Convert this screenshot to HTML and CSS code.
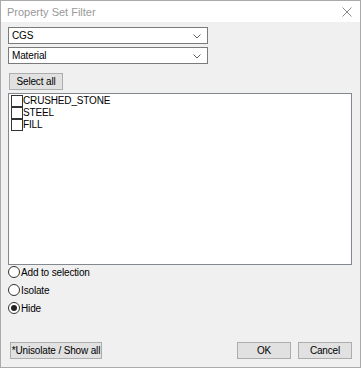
FILE: index.html
```html
<!DOCTYPE html>
<html lang="en">
<head>
  <meta charset="UTF-8">
  <title>Property Set Filter</title>
  <link rel="stylesheet" href="styles.css">
</head>
<body>
  <div class="window">
    <div class="titlebar">
      <span class="title">Property Set Filter</span>
      <svg class="close" width="10" height="10" viewBox="0 0 10 10">
        <path d="M0.5 0.5 L9.5 9.5 M9.5 0.5 L0.5 9.5" stroke="#8a8a8a" stroke-width="1" fill="none"/>
      </svg>
    </div>

    <div class="content">
      <div class="combo">
        <span>CGS</span>
        <svg width="8" height="5" viewBox="0 0 8 5"><path d="M0.5 0.5 L4 4 L7.5 0.5" stroke="#606060" fill="none"/></svg>
      </div>
      <div class="combo">
        <span>Material</span>
        <svg width="8" height="5" viewBox="0 0 8 5"><path d="M0.5 0.5 L4 4 L7.5 0.5" stroke="#606060" fill="none"/></svg>
      </div>

      <button class="btn select-all">Select all</button>

      <div class="list">
        <label class="item"><span class="check"></span>CRUSHED_STONE</label>
        <label class="item"><span class="check"></span>STEEL</label>
        <label class="item"><span class="check"></span>FILL</label>
      </div>

      <div class="radios">
        <label class="radio"><span class="dot"></span>Add to selection</label>
        <label class="radio"><span class="dot"></span>Isolate</label>
        <label class="radio"><span class="dot checked"></span>Hide</label>
      </div>

      <div class="footer">
        <button class="btn wide">*Unisolate / Show all</button>
        <div class="right">
          <button class="btn">OK</button>
          <button class="btn">Cancel</button>
        </div>
      </div>
    </div>
  </div>
</body>
</html>
```

FILE: styles.css
```css
body {
  margin: 0;
  font-family: "Liberation Sans", Arial, sans-serif;
  font-size: 10px;
  letter-spacing: -0.15px;
  color: #000;
}

.window {
  width: 361px;
  height: 368px;
  box-sizing: border-box;
  border: 1px solid #aaaaaa;
  display: flex;
  flex-direction: column;
  background: #f0f0f0;
}

.titlebar {
  height: 21px;
  background: #fff;
  display: flex;
  align-items: center;
  justify-content: space-between;
  padding: 0 7px 0 6px;
}

.title {
  color: #999;
  font-size: 11px;
  letter-spacing: 0;
}

.close {
  margin-right: 1px;
}

.content {
  flex: 1;
  display: flex;
  flex-direction: column;
  padding: 5px 7px 8px 7px;
}

.combo {
  width: 200px;
  height: 17px;
  box-sizing: border-box;
  border: 1px solid #7a7a7a;
  background: #fff;
  display: flex;
  align-items: center;
  justify-content: space-between;
  padding: 0 6px 0 3px;
  margin-bottom: 3px;
}

.combo svg {
  margin-top: 1px;
}

.btn {
  font-family: "Liberation Sans", Arial, sans-serif;
  font-size: 10px;
  letter-spacing: -0.15px;
  height: 17px;
  background: #e1e1e1;
  border: 1px solid #adadad;
  padding: 0;
  color: #000;
  white-space: nowrap;
}

.select-all {
  width: 54px;
  margin: 6px 0 3px 1px;
}

.list {
  height: 172px;
  box-sizing: border-box;
  border: 1px solid #828790;
  background: #fff;
  padding: 1px 2px;
  margin-right: 1px;
}

.item {
  display: flex;
  align-items: center;
  height: 11px;
  line-height: 11px;
  margin-bottom: 1px;
}

.check {
  width: 10px;
  height: 10px;
  border: 1px solid #333;
  background: #fff;
}

.radios {
  display: flex;
  flex-direction: column;
  gap: 6px;
  margin-top: 1px;
}

.radio {
  display: flex;
  align-items: center;
  height: 12px;
}

.dot {
  width: 10px;
  height: 10px;
  border: 1px solid #333;
  border-radius: 50%;
  background: #fff;
  margin-right: 1px;
  display: flex;
  align-items: center;
  justify-content: center;
}

.dot.checked::after {
  content: "";
  width: 6px;
  height: 6px;
  border-radius: 50%;
  background: #222;
}

.footer {
  margin-top: auto;
  display: flex;
  justify-content: space-between;
  padding: 0 1px 0 2px;
}

.wide {
  width: 92px;
}

.right {
  display: flex;
  gap: 7px;
}

.right .btn {
  width: 54px;
}
```
